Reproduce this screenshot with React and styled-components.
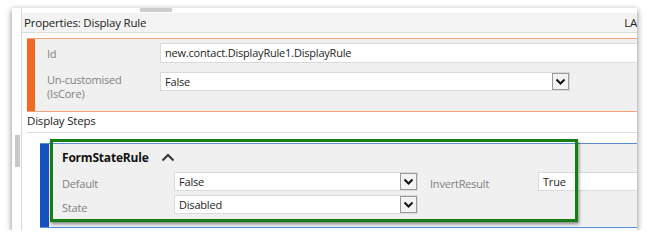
import React from "react";
import styled, { createGlobalStyle } from "styled-components";

const Global = createGlobalStyle`
  html, body { margin: 0; padding: 0; background: #ffffff; }
  body { font-family: "Open Sans", "Noto Sans", sans-serif; font-size: 11px; letter-spacing: -0.2px; color: #222; }
`;

const Frame = styled.div`
  position: relative;
  margin: 8px 0 0 12px;
  width: 625px;
  height: 222px;
  display: flex;
  overflow: hidden;
  background: #fff;
  box-shadow: 0 2px 6px rgba(0, 0, 0, 0.5);
`;

const Gutter = styled.div`
  width: 9px;
  flex: none;
  display: flex;
  flex-direction: column;
  align-items: flex-start;
  padding-left: 3px;
  box-sizing: border-box;
`;

const Thumb = styled.div`
  margin-top: 127px;
  width: 5px;
  height: 32px;
  background: #c8c8c8;
`;

const Pane = styled.div`
  flex: 1;
  min-width: 0;
  border-left: 1px solid #d6d6d6;
  display: flex;
  flex-direction: column;
`;

const TopStrip = styled.div`
  height: 5px;
  flex: none;
`;

const Tab = styled.div`
  margin-left: 118px;
  width: 32px;
  height: 4px;
  background: #cdcdcd;
`;

const Header = styled.div`
  height: 19px;
  flex: none;
  display: flex;
  align-items: center;
  justify-content: space-between;
  padding-left: 2px;
  background: #f3f3f3;
  border-bottom: 1px solid #dcdcdc;
  font-size: 11.5px;
  color: #222;
  white-space: nowrap;
`;

const Section = styled.div`
  margin: ${(p) => p.$top}px 0 0 ${(p) => p.$left}px;
  display: flex;
  background: #f0f0f0;
  border-top: 1px solid ${(p) => p.$line};
  border-bottom: 1px solid ${(p) => p.$line};
  height: ${(p) => p.$height}px;
  box-sizing: border-box;
  flex: none;
`;

const Bar = styled.div`
  width: ${(p) => p.$width}px;
  flex: none;
  background: ${(p) => p.$color};
`;

const Body = styled.div`
  flex: 1;
  display: flex;
  flex-direction: column;
  padding: ${(p) => p.$pad};
`;

const Row = styled.div`
  display: flex;
  align-items: flex-start;
  margin-top: ${(p) => p.$mt || 0}px;
`;

const Label = styled.div`
  width: ${(p) => p.$w}px;
  margin-left: ${(p) => p.$ml || 0}px;
  flex: none;
  color: #808080;
  font-size: 11px;
  line-height: 14px;
  padding-top: ${(p) => p.$pt || 0}px;
  white-space: nowrap;
`;

const Input = styled.div`
  position: relative;
  box-sizing: border-box;
  width: ${(p) => p.$w};
  height: ${(p) => p.$h || 20}px;
  flex: none;
  background: #fff;
  border: 1px solid #dadada;
  padding-left: 4px;
  font-size: 11px;
  line-height: ${(p) => (p.$h || 20) - 2}px;
  color: #1e1e1e;
  white-space: nowrap;
`;

const DropBtn = styled.div`
  position: absolute;
  right: 0;
  top: 0;
  bottom: 0;
  width: 17px;
  box-sizing: border-box;
  border: 1px solid #9a9a9a;
  background: #f3f3f3;
  display: flex;
  align-items: center;
  justify-content: center;
`;

const StepsTitle = styled.div`
  margin: 1px 0 0 5px;
  height: 20px;
  flex: none;
  line-height: 16px;
  font-size: 11.5px;
  color: #222;
  border-bottom: 1px solid #dedede;
  box-sizing: border-box;
`;

const RuleHead = styled.div`
  display: flex;
  align-items: center;
  gap: 12px;
  height: 16px;
  font-weight: 700;
  font-size: 12px;
  color: #111;
`;

const Highlight = styled.div`
  position: absolute;
  left: 38px;
  top: 131px;
  width: 528px;
  height: 83px;
  box-sizing: border-box;
  border: 3px solid #167d16;
  box-shadow: 1px 2px 3px rgba(0, 0, 0, 0.45);
  pointer-events: none;
`;

const Chevron = () => (
  <svg width="11" height="8" viewBox="0 0 11 8">
    <path d="M1.5 1.5 L5.5 5.5 L9.5 1.5" fill="none" stroke="#111" strokeWidth="2" />
  </svg>
);

const Caret = () => (
  <svg width="14" height="9" viewBox="0 0 14 9">
    <path d="M1.5 7.5 L7 2 L12.5 7.5" fill="none" stroke="#333" strokeWidth="2" />
  </svg>
);

const Select = ({ w, h, children }) => (
  <Input $w={w} $h={h}>
    {children}
    <DropBtn>
      <Chevron />
    </DropBtn>
  </Input>
);

export default function App() {
  return (
    <>
      <Global />
      <Frame>
        <Gutter>
          <Thumb />
        </Gutter>
        <Pane>
          <TopStrip>
            <Tab />
          </TopStrip>
          <Header>
            <span>Properties: Display Rule</span>
            <span>LA</span>
          </Header>
          <Section $top={5} $left={5} $line="#f4a27c" $height={74}>
            <Bar $width={8} $color="#f26a21" />
            <Body $pad="4px 0 0 12px">
              <Row>
                <Label $w={113} $pt={4}>Id</Label>
                <Input $w="500px">new.contact.DisplayRule1.DisplayRule</Input>
              </Row>
              <Row $mt={9}>
                <Label $w={113} $pt={1}>
                  Un-customised
                  <br />
                  (IsCore)
                </Label>
                <Select w="410px" h={19}>False</Select>
              </Row>
            </Body>
          </Section>
          <StepsTitle>Display Steps</StepsTitle>
          <Section $top={10} $left={18} $line="#5b8fd6" $height={85}>
            <Bar $width={9} $color="#1552bb" />
            <Body $pad="5px 0 0 13px">
              <RuleHead>
                FormStateRule
                <Caret />
              </RuleHead>
              <Row $mt={7}>
                <Label $w={112} $pt={5}>Default</Label>
                <Select w="244px" h={19}>False</Select>
                <Label $w={108} $ml={12} $pt={5}>InvertResult</Label>
                <Input $w="120px" $h={19}>True</Input>
              </Row>
              <Row $mt={4}>
                <Label $w={112} $pt={6}>State</Label>
                <Select w="244px" h={19}>Disabled</Select>
              </Row>
            </Body>
          </Section>
        </Pane>
        <Highlight />
      </Frame>
    </>
  );
}
